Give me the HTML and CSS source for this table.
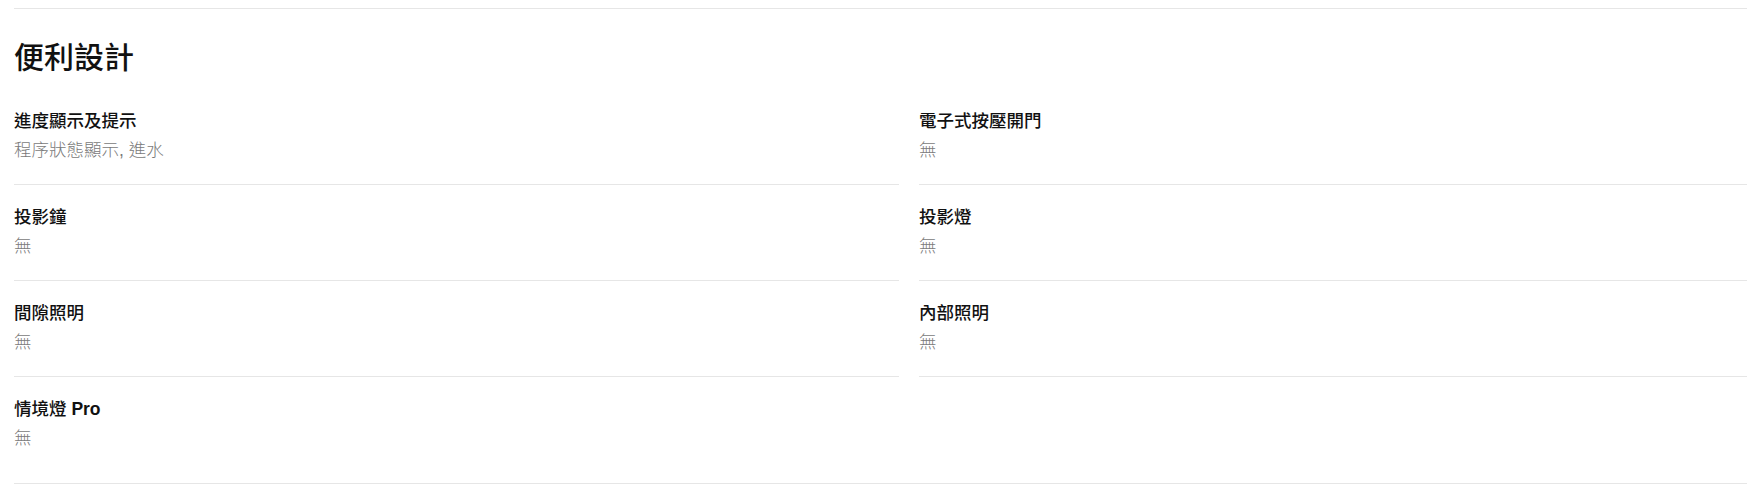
FILE: index.html
```html
<!DOCTYPE html>
<html lang="zh-Hant">
<head>
<meta charset="utf-8">
<title>便利設計</title>
<link rel="stylesheet" href="styles.css">
</head>
<body>
<div class="page">
  <section class="spec-section">
    <h2 class="spec-title">便利設計</h2>
    <div class="spec-grid">
      <div class="spec-item">
        <div class="spec-label">進度顯示及提示</div>
        <div class="spec-value">程序狀態顯示, 進水</div>
      </div>
      <div class="spec-item">
        <div class="spec-label">電子式按壓開門</div>
        <div class="spec-value">無</div>
      </div>
      <div class="spec-item">
        <div class="spec-label">投影鐘</div>
        <div class="spec-value">無</div>
      </div>
      <div class="spec-item">
        <div class="spec-label">投影燈</div>
        <div class="spec-value">無</div>
      </div>
      <div class="spec-item">
        <div class="spec-label">間隙照明</div>
        <div class="spec-value">無</div>
      </div>
      <div class="spec-item">
        <div class="spec-label">內部照明</div>
        <div class="spec-value">無</div>
      </div>
      <div class="spec-item spec-item-last">
        <div class="spec-label">情境燈 <span class="latin">Pro</span></div>
        <div class="spec-value">無</div>
      </div>
    </div>
  </section>
</div>
</body>
</html>
```

FILE: styles.css
```css
html, body {
  margin: 0;
  padding: 0;
  background: #ffffff;
  overflow: hidden;
}

body {
  font-family: "Liberation Sans", "Noto Sans CJK TC", sans-serif;
  color: #111111;
}

.page {
  padding: 8px 0 0 14px;
  width: 1790px;
}

.spec-section {
  border-top: 1px solid #e6e6e6;
  border-bottom: 1px solid #e6e6e6;
}

.spec-title {
  margin: 29px 0 0 0;
  font-size: 30px;
  line-height: 40px;
  font-weight: 500;
  color: #111111;
}

.spec-grid {
  display: grid;
  grid-template-columns: 885px 885px;
  column-gap: 20px;
  margin-top: 11px;
}

.spec-item {
  padding: 20px 0 21px 0;
  border-bottom: 1px solid #e6e6e6;
}

.spec-item-last {
  border-bottom: none;
  padding-bottom: 32px;
}

.spec-label {
  font-size: 17.5px;
  line-height: 24px;
  font-weight: 500;
  color: #111111;
}

.latin {
  font-weight: 700;
}

.spec-value {
  margin-top: 4px;
  font-size: 17.5px;
  line-height: 26px;
  font-weight: 300;
  color: #7a7a7a;
}
```
